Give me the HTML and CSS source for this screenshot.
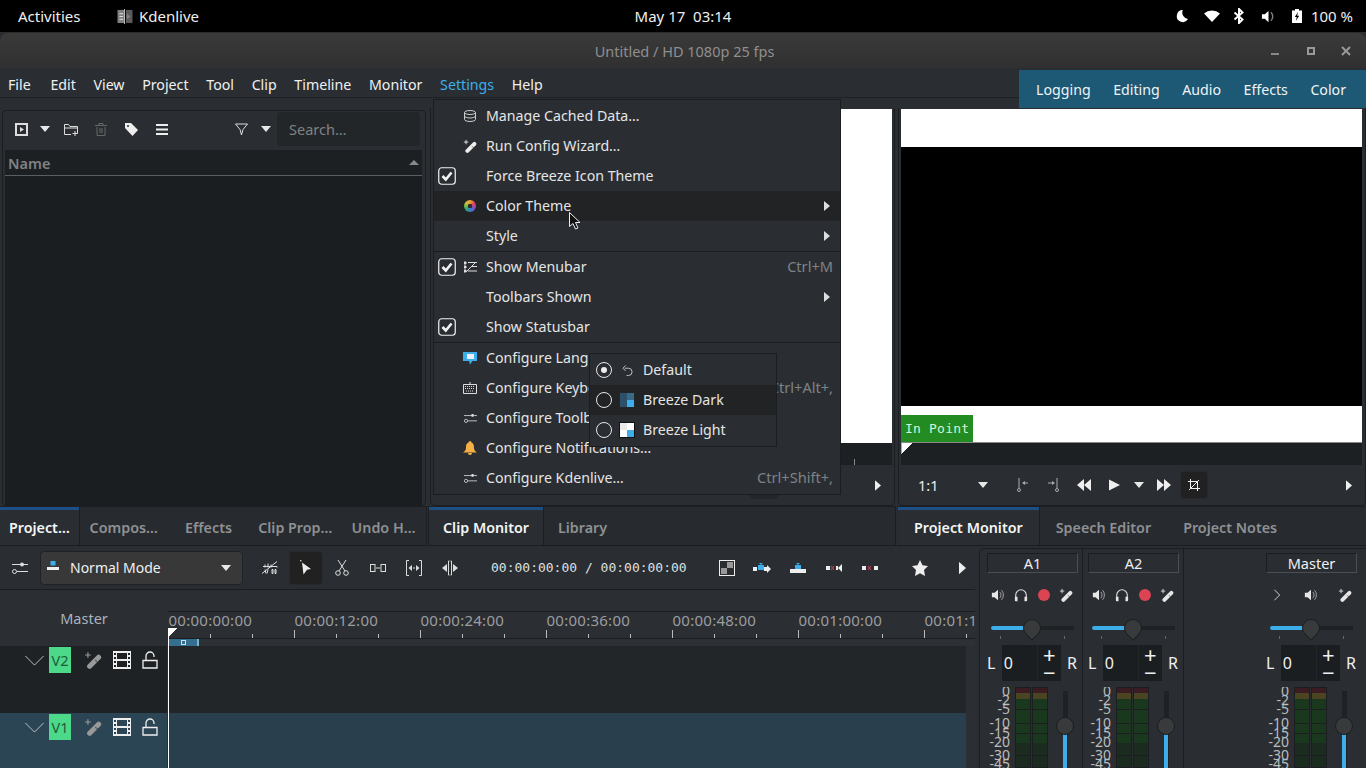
FILE: index.html
```html
<!DOCTYPE html>
<html lang="en">
<head>
<meta charset="utf-8">
<title>Kdenlive</title>
<link rel="stylesheet" href="styles.css">
</head>
<body>
<svg class="defs" width="0" height="0" aria-hidden="true">
  <symbol id="wand" viewBox="0 0 16 16"><path d="M5 13.500 13 5.500" stroke="currentColor" stroke-width="4.500" stroke-linecap="round" fill="none"/><path d="M10 8l2.500 2.500" stroke="#2a2e32" stroke-width="1" opacity=".6"/><path d="M3.500 1v5M1 3.500h5" stroke="currentColor" stroke-width="1" fill="none"/></symbol>
  <symbol id="sliders" viewBox="0 0 16 16"><path d="M0 4.500h16M5 11.500h11" stroke="currentColor" stroke-width="1" fill="none"/><circle cx="10" cy="4.500" r="2" fill="currentColor"/><circle cx="2.500" cy="11.500" r="2" fill="#2a2e32" stroke="currentColor"/></symbol>
  <symbol id="speaker" viewBox="0 0 16 16"><path d="M1 5.500h3L8 2v12l-4-3.500H1z" fill="currentColor"/><path d="M10 4.500a5 5 0 0 1 0 7M12 2.500a8 8 0 0 1 0 11" stroke="currentColor" stroke-width="1" fill="none" opacity=".7"/></symbol>
  <symbol id="phones" viewBox="0 0 16 16"><path d="M2 12V8a6 6 0 0 1 12 0v4" stroke="currentColor" stroke-width="1.200" fill="none"/><path d="M1 10h3v5H2a1 1 0 0 1-1-1zM15 10h-3v5h2a1 1 0 0 0 1-1z" fill="currentColor"/></symbol>
  <symbol id="film" viewBox="0 0 18 18"><path fill-rule="evenodd" d="M0 0h18v18H0zM4 2v6h10V2zM4 10v6h10v-6zM1 2v2h2V2zM1 6v2h2V6zM1 10v2h2v-2zM1 14v2h2v-2zM15 2v2h2V2zM15 6v2h2V6zM15 10v2h2v-2zM15 14v2h2v-2z" fill="currentColor"/></symbol>
  <symbol id="lock" viewBox="0 0 16 18"><path d="M1 9.500h14v7.500H1zM4 9V5a4 4 0 0 1 8 0v1" stroke="currentColor" stroke-width="1.300" fill="none"/></symbol>
  <symbol id="chev" viewBox="0 0 22 12"><path d="M1 1l10 10L21 1" stroke="currentColor" stroke-width="1" fill="none"/></symbol>
  <symbol id="check" viewBox="0 0 18 18"><rect x=".75" y=".75" width="16.500" height="16.500" rx="3" fill="none" stroke="currentColor" stroke-width="1.200"/><path d="M4.500 9l3.300 3.500 5.700-7" stroke="currentColor" stroke-width="2.600" fill="none"/></symbol>
  <symbol id="conf" viewBox="0 0 16 12"><path d="M0 3h16M5 9.500h11" stroke="currentColor" stroke-width="1" fill="none"/><rect x="9" y="1" width="3" height="3.500" rx="1" fill="currentColor"/><circle cx="2.500" cy="9.500" r="2" fill="#2a2e32" stroke="currentColor"/></symbol>
  <symbol id="playr" viewBox="0 0 8 14"><path d="M0 0l8 7-8 7z" fill="currentColor"/></symbol>
</svg>

<div class="desk">
  <header class="topbar">
    <div class="top-left">
      <span class="activities">Activities</span>
      <span class="appmenu">
        <svg class="appicon" viewBox="0 0 16 16"><path d="M0 1h7v14H0z" fill="#808080"/><path d="M9 1h7v14H9z" fill="#5a5a5a"/><path d="M2 5h4M2 8h4M2 11h4" stroke="#ddd" stroke-width="1"/><path d="M10 5l4 3-4 3z" fill="#808080"/><path d="M7.500 0v16" stroke="#ccc"/></svg>
        Kdenlive
      </span>
    </div>
    <div class="clock">May 17&nbsp; 03:14</div>
    <div class="tray">
      <svg class="t-moon" viewBox="0 0 14 14"><path d="M8 0a7 7 0 1 0 6 10.500A7.500 7.500 0 0 1 8 0z" fill="#fff"/></svg>
      <svg class="t-wifi" viewBox="0 0 16 12"><path d="M0 3.500a12 12 0 0 1 16 0L8 12z" fill="#fff"/></svg>
      <svg class="t-bt" viewBox="0 0 12 16"><path d="M1.500 4.500l8 7L6 15V1l3.500 3.500-8 7" stroke="#fff" stroke-width="2" fill="none"/></svg>
      <svg class="t-vol" viewBox="0 0 16 16"><path d="M1 5.500h3L8 2v12l-4-3.500H1z" fill="#fff"/><path d="M10.500 3.500a6 6 0 0 1 0 9" stroke="#fff" stroke-width="1.500" fill="none" opacity=".5"/></svg>
      <svg class="t-bat" viewBox="0 0 10 14"><path d="M3 0h4v1.500h3V14H0V1.500h3z" fill="#fff"/><path d="M6 3L2.800 8h2l-1 4L7.200 6.800h-2z" fill="#000"/></svg>
      <span class="pct">100 %</span>
    </div>
  </header>

  <div class="window">
    <div class="titlebar">
      <span class="wintitle">Untitled / HD 1080p 25 fps</span>
      <div class="winctl">
        <span class="wc-min"></span>
        <span class="wc-max"></span>
        <svg class="wc-close" viewBox="0 0 10 10"><path d="M1 1l8 8M9 1l-8 8" stroke="#999" stroke-width="2"/></svg>
      </div>
    </div>

    <nav class="menubar">
      <div class="menus">
        <span class="m-file">File</span><span>Edit</span><span>View</span><span>Project</span><span>Tool</span><span>Clip</span><span>Timeline</span><span>Monitor</span><span class="on">Settings</span><span>Help</span>
      </div>
      <div class="layouts">
        <span>Logging</span><span>Editing</span><span>Audio</span><span>Effects</span><span>Color</span>
      </div>
    </nav>

    <section class="docks">
      <div class="dock dock-left">
        <div class="bin">
          <div class="bin-bar">
            <svg class="bi b-add" viewBox="0 0 13 13"><rect x="1" y="1" width="11" height="11" fill="none" stroke="#ddd" stroke-width="2"/><path d="M5 4l4 2.500L5 9z" fill="#ddd"/></svg>
            <i class="caret c-a"></i>
            <svg class="bi b-folder" viewBox="0 0 14 13"><path d="M.5 11.500V1.500h4l1.500 2h7.500v7M.5 5h13M.5 11.500H7" stroke="#ddd" fill="none"/><path d="M11 8v5M8.500 10.500h5" stroke="#ddd"/></svg>
            <svg class="bi b-trash" viewBox="0 0 12 13"><path d="M2 4v8.500h8V4M0 2.500h12M4 2V.5h4V2M5 5v5M7 5v5" stroke="#666" fill="none"/></svg>
            <svg class="bi b-tag" viewBox="0 0 13 13"><path d="M0 2V0h6l7 7-5.500 6L0 5z" fill="#eee"/><circle cx="3" cy="3" r="1" fill="#2a2e32"/></svg>
            <svg class="bi b-menu" viewBox="0 0 12 11"><path d="M0 1h12M0 5.500h12M0 10h12" stroke="#eee" stroke-width="2"/></svg>
            <svg class="bi b-funnel" viewBox="0 0 13 13"><path d="M.5 1h12L8 6.500 6.500 12 5 6.500z" fill="none" stroke="#ddd"/></svg>
            <i class="caret c-b"></i>
            <div class="search">Search…</div>
          </div>
          <div class="tree-head"><span>Name</span><i class="caret up"></i></div>
          <div class="tree-body"></div>
        </div>
        <div class="tabbar">
          <span class="tab active">Project…</span><span class="tab">Compos…</span><span class="tab">Effects</span><span class="tab">Clip Prop…</span><span class="tab">Undo H…</span>
        </div>
      </div>

      <div class="dock dock-clip">
        <div class="monitor">
          <div class="video plain"></div>
          <div class="mruler"><i class="rtick"></i></div>
          <div class="mbar">
            <span class="grow"></span>
            <svg class="mnext" viewBox="0 0 8 14"><use href="#playr"/></svg>
          </div>
        </div>
        <div class="tabbar">
          <span class="tab active">Clip Monitor</span><span class="tab">Library</span>
        </div>
      </div>

      <div class="dock dock-project">
        <div class="monitor">
          <div class="video">
            <div class="vwhite"></div>
            <div class="vblack"></div>
            <div class="vwhite low"><span class="inpoint">In Point</span></div>
          </div>
          <div class="mruler"><i class="mhead"></i></div>
          <div class="mbar">
            <span class="ratio">1:1</span>
            <i class="caret c-ratio"></i>
            <svg class="mi m-in" viewBox="0 0 12 14"><path d="M3 0v10M12 5H7" stroke="#aaa"/><circle cx="3" cy="12" r="1.500" fill="none" stroke="#aaa"/><path d="M6 5l3-2v4z" fill="#aaa"/></svg>
            <svg class="mi m-out" viewBox="0 0 12 14"><path d="M9 0v10M0 5h5" stroke="#aaa"/><circle cx="9" cy="12" r="1.500" fill="none" stroke="#aaa"/><path d="M7 5L4 3v4z" fill="#aaa"/></svg>
            <svg class="mi m-rw" viewBox="0 0 14 12"><path d="M7 0v12L0 6zM14 0v12L7 6z" fill="#eee"/></svg>
            <svg class="mi m-play" viewBox="0 0 12 12"><path d="M0 0l12 6-12 6z" fill="#eee"/></svg>
            <i class="caret c-play"></i>
            <svg class="mi m-ff" viewBox="0 0 14 12"><path d="M0 0v12l7-6zM7 0v12l7-6z" fill="#eee"/></svg>
            <span class="m-crop"><svg viewBox="0 0 12 12"><path d="M0 2.500h9.500V12M2.500 0v9.500H12M1 11l10-10" stroke="#eee" fill="none"/></svg></span>
            <span class="grow"></span>
            <svg class="mnext" viewBox="0 0 8 14"><use href="#playr"/></svg>
          </div>
        </div>
        <div class="tabbar">
          <span class="tab active">Project Monitor</span><span class="tab">Speech Editor</span><span class="tab">Project Notes</span>
        </div>
      </div>
    </section>

    <section class="bottom">
      <div class="timeline">
        <div class="tl-bar">
          <svg class="ti ti-set" viewBox="0 0 16 16"><use href="#sliders"/></svg>
          <div class="combo">
            <svg class="combo-ic" viewBox="0 0 12 10"><rect x="3.500" y="0" width="5" height="4.500" fill="#3daee9"/><rect x="0" y="6" width="12" height="3" fill="#eee"/></svg>
            <span>Normal Mode</span>
            <i class="caret c-combo"></i>
          </div>
          <svg class="ti ti-sp" viewBox="0 0 16 14"><path d="M0 13L15 1M1 6h14v1M3 4v3M6 3v4M9 4v3" stroke="#ddd" fill="none"/><path d="M10 9h1v4h-1zM13 9h1v4h-1zM3 9l1 4M6 9l-1 4" stroke="#ddd" fill="none"/></svg>
          <span class="tool-on"><svg viewBox="0 0 12 15"><circle cx=".8" cy=".8" r=".8" fill="#eee"/><path d="M2 2.500l9 6.500-4 .8L3.500 14.500z" fill="#eee"/></svg></span>
          <svg class="ti ti-cut" viewBox="0 0 14 16"><path d="M3 0l7 11M11 0L4 11" stroke="#ddd" fill="none"/><circle cx="3" cy="13" r="2.300" fill="none" stroke="#ddd"/><circle cx="11" cy="13" r="2.300" fill="none" stroke="#ddd"/></svg>
          <svg class="ti ti-sl" viewBox="0 0 16 8"><rect x=".5" y=".5" width="4.500" height="7" fill="none" stroke="#ddd"/><rect x="11" y=".5" width="4.500" height="7" fill="none" stroke="#ddd"/><path d="M6 4h4" stroke="#ddd"/></svg>
          <svg class="ti ti-fit" viewBox="0 0 16 16"><path d="M3 .5H.5v15H3M13 .5h2.500v15H13" stroke="#ddd" fill="none"/><path d="M2.500 8l3.500-3v6zM13.500 8L10 5v6z" fill="#ddd"/><path d="M7 7.500h2v1H7z" fill="#ddd"/></svg>
          <svg class="ti ti-rip" viewBox="0 0 16 16"><path d="M6.500 1v14M9.500 1v14M6.500 1h1M6.500 15h1M9.500 1h-1M9.500 15h-1" stroke="#ddd" fill="none"/><path d="M0 8l5-4v8zM16 8l-5-4v8z" fill="#ddd"/></svg>
          <span class="tc">00:00:00:00 / 00:00:00:00</span>
          <svg class="ti ti-ck" viewBox="0 0 16 16"><rect x=".5" y=".5" width="15" height="15" fill="none" stroke="#eee"/><rect x="8" y="2" width="6" height="6" fill="#999"/><rect x="2" y="8" width="6" height="6" fill="#999"/></svg>
          <svg class="ti ti-a" viewBox="0 0 18 10"><rect x="5" y="2" width="6" height="5" fill="#3daee9"/><path d="M6 0h4L8 2z" fill="#3daee9"/><rect x="0" y="4" width="4" height="4" fill="#eee"/><rect x="11" y="4" width="3" height="4" fill="#eee"/><path d="M14 2l4 4-4 4z" fill="#eee"/></svg>
          <svg class="ti ti-b" viewBox="0 0 16 10"><rect x="5" y="2" width="6" height="5" fill="#3daee9"/><path d="M6 0h4L8 2z" fill="#3daee9"/><rect x="0" y="6" width="16" height="4" fill="#eee"/></svg>
          <svg class="ti ti-c" viewBox="0 0 16 8"><rect x="0" y="2" width="4" height="4" fill="#eee"/><path d="M5 2l3 4M8 2L5 6" stroke="#da4453"/><rect x="10" y="2" width="2" height="4" fill="#eee"/><path d="M16 0v8l-4-4z" fill="#eee"/></svg>
          <svg class="ti ti-d" viewBox="0 0 16 8"><rect x="0" y="2" width="4" height="4" fill="#eee"/><path d="M6 2l3 4M9 2L6 6" stroke="#da4453"/><rect x="12" y="2" width="4" height="4" fill="#eee"/></svg>
          <svg class="ti ti-star" viewBox="0 0 16 16"><path d="M8 0l2.500 5.300 5.500.8-4 4 1 5.900L8 13.300 3 16l1-5.900-4-4 5.500-.8z" fill="#eee"/></svg>
          <svg class="ti ti-more" viewBox="0 0 8 14"><use href="#playr"/></svg>
        </div>

        <div class="tl-body">
          <div class="ruler-row">
            <div class="rhead">Master</div>
            <div class="ruler">
              <div class="rlabels">
                <span>00:00:00:00</span><span>00:00:12:00</span><span>00:00:24:00</span><span>00:00:36:00</span><span>00:00:48:00</span><span>00:01:00:00</span><span>00:01:12:00</span>
              </div>
              <div class="rticks"></div>
              <div class="rzone"><i class="zone"><b></b></i></div>
            </div>
          </div>
          <div class="track v2">
            <div class="thead">
              <svg class="t-chev" viewBox="0 0 22 12"><use href="#chev"/></svg>
              <span class="tbadge">V2</span>
              <svg class="t-wand" viewBox="0 0 16 16"><use href="#wand"/></svg>
              <svg class="t-film" viewBox="0 0 18 18"><use href="#film"/></svg>
              <svg class="t-lock" viewBox="0 0 16 18"><use href="#lock"/></svg>
            </div>
            <div class="tlane"></div>
          </div>
          <div class="track v1">
            <div class="thead">
              <svg class="t-chev" viewBox="0 0 22 12"><use href="#chev"/></svg>
              <span class="tbadge">V1</span>
              <svg class="t-wand" viewBox="0 0 16 16"><use href="#wand"/></svg>
              <svg class="t-film" viewBox="0 0 18 18"><use href="#film"/></svg>
              <svg class="t-lock" viewBox="0 0 16 18"><use href="#lock"/></svg>
            </div>
            <div class="tlane"></div>
          </div>
          <div class="playhead"></div>
        </div>
      </div>

      <div class="mixer">
        <div class="chan">
          <div class="chan-title">A1</div>
          <div class="chan-ic">
            <svg viewBox="0 0 16 16"><use href="#speaker"/></svg>
            <svg viewBox="0 0 16 16"><use href="#phones"/></svg>
            <span class="rec"></span>
            <svg viewBox="0 0 16 16"><use href="#wand"/></svg>
          </div>
          <div class="pan"><i class="pan-fill"></i><i class="pan-thumb"></i></div>
          <div class="lr"><span>L</span><div class="lr-box"><span class="lr-val">0</span><span class="lr-btn"><b>+</b><b>−</b></span></div><span>R</span></div>
          <div class="meter">
            <div class="scale"><span style="top:-3px">0</span><span style="top:6px">-2</span><span style="top:15px">-5</span><span style="top:29px">-10</span><span style="top:39px">-15</span><span style="top:48px">-20</span><span style="top:61px">-30</span><span style="top:70px">-45</span></div>
            <i class="bar"></i><i class="bar"></i>
            <div class="fader"><i class="f-fill"></i><i class="f-thumb"></i></div>
          </div>
        </div>
        <div class="chan">
          <div class="chan-title">A2</div>
          <div class="chan-ic">
            <svg viewBox="0 0 16 16"><use href="#speaker"/></svg>
            <svg viewBox="0 0 16 16"><use href="#phones"/></svg>
            <span class="rec"></span>
            <svg viewBox="0 0 16 16"><use href="#wand"/></svg>
          </div>
          <div class="pan"><i class="pan-fill"></i><i class="pan-thumb"></i></div>
          <div class="lr"><span>L</span><div class="lr-box"><span class="lr-val">0</span><span class="lr-btn"><b>+</b><b>−</b></span></div><span>R</span></div>
          <div class="meter">
            <div class="scale"><span style="top:-3px">0</span><span style="top:6px">-2</span><span style="top:15px">-5</span><span style="top:29px">-10</span><span style="top:39px">-15</span><span style="top:48px">-20</span><span style="top:61px">-30</span><span style="top:70px">-45</span></div>
            <i class="bar"></i><i class="bar"></i>
            <div class="fader"><i class="f-fill"></i><i class="f-thumb"></i></div>
          </div>
        </div>
        <div class="chan master">
          <div class="chan-title">Master</div>
          <div class="chan-ic">
            <svg viewBox="0 0 16 16"><path d="M5 2l6 6-6 6" stroke="currentColor" fill="none"/></svg>
            <svg viewBox="0 0 16 16"><use href="#speaker"/></svg>
            <svg viewBox="0 0 16 16"><use href="#wand"/></svg>
          </div>
          <div class="pan"><i class="pan-fill"></i><i class="pan-thumb"></i></div>
          <div class="lr"><span>L</span><div class="lr-box"><span class="lr-val">0</span><span class="lr-btn"><b>+</b><b>−</b></span></div><span>R</span></div>
          <div class="meter">
            <div class="scale"><span style="top:-3px">0</span><span style="top:6px">-2</span><span style="top:15px">-5</span><span style="top:29px">-10</span><span style="top:39px">-15</span><span style="top:48px">-20</span><span style="top:61px">-30</span><span style="top:70px">-45</span></div>
            <i class="bar"></i><i class="bar"></i>
            <div class="fader"><i class="f-fill"></i><i class="f-thumb"></i></div>
          </div>
        </div>
      </div>
    </section>
  </div>
</div>

<div class="menu">
  <div class="mrow"><span class="mchk"></span><span class="mic"><svg class="i-db" viewBox="0 0 12 12"><ellipse cx="6" cy="2.500" rx="5.500" ry="2" fill="none" stroke="#ccc"/><path d="M.5 2.500v7c0 1 2.500 2 5.500 2s5.500-1 5.500-2v-7M.5 6c0 1 2.500 2 5.500 2s5.500-1 5.500-2" fill="none" stroke="#ccc"/></svg></span><span class="mtxt">Manage Cached Data…</span></div>
  <div class="mrow"><span class="mchk"></span><span class="mic"><svg class="i-wand" viewBox="0 0 16 16"><use href="#wand"/></svg></span><span class="mtxt">Run Config Wizard…</span></div>
  <div class="mrow"><span class="mchk"><svg viewBox="0 0 18 18"><use href="#check"/></svg></span><span class="mic"></span><span class="mtxt">Force Breeze Icon Theme</span></div>
  <div class="mrow hover"><span class="mchk"></span><span class="mic"><i class="palette"></i></span><span class="mtxt">Color Theme</span><svg class="marrow" viewBox="0 0 6 10"><path d="M0 0l6 5-6 5z" fill="#ddd"/></svg></div>
  <div class="mrow"><span class="mchk"></span><span class="mic"></span><span class="mtxt">Style</span><svg class="marrow" viewBox="0 0 6 10"><path d="M0 0l6 5-6 5z" fill="#ddd"/></svg></div>
  <div class="msep"></div>
  <div class="mrow"><span class="mchk"><svg viewBox="0 0 18 18"><use href="#check"/></svg></span><span class="mic"><svg class="i-mb" viewBox="0 0 13 12"><path d="M0 1h2v2H0zM0 5h2v2H0zM0 9h2v2H0zM4 1.500h9M7 5.500h6M4 10h9M2 11l10-10" fill="#ddd" stroke="#ddd" stroke-width="1"/></svg></span><span class="mtxt">Show Menubar</span><span class="mkey">Ctrl+M</span></div>
  <div class="mrow"><span class="mchk"></span><span class="mic"></span><span class="mtxt">Toolbars Shown</span><svg class="marrow" viewBox="0 0 6 10"><path d="M0 0l6 5-6 5z" fill="#ddd"/></svg></div>
  <div class="mrow"><span class="mchk"><svg viewBox="0 0 18 18"><use href="#check"/></svg></span><span class="mic"></span><span class="mtxt">Show Statusbar</span></div>
  <div class="msep"></div>
  <div class="mrow"><span class="mchk"></span><span class="mic"><svg class="i-lang" viewBox="0 0 14 13"><path d="M0 0h14v9H9.500L7 12.500 6 9H0z" fill="#3daee9"/><rect x="4" y="2" width="7" height="5" fill="#eef"/></svg></span><span class="mtxt">Configure Language…</span></div>
  <div class="mrow"><span class="mchk"></span><span class="mic"><svg class="i-kb" viewBox="0 0 14 12"><path d="M7 0v2M.5 2.500h13v9H.5z" fill="none" stroke="#ddd"/><path d="M2 4.500h10M2 6.500h10M3 9h8" stroke="#ddd" stroke-dasharray="1 1"/></svg></span><span class="mtxt">Configure Keyboard Shortcuts…</span><span class="mkey">Ctrl+Alt+,</span></div>
  <div class="mrow"><span class="mchk"></span><span class="mic"><svg class="i-conf" viewBox="0 0 16 12"><use href="#conf"/></svg></span><span class="mtxt">Configure Toolbars…</span></div>
  <div class="mrow"><span class="mchk"></span><span class="mic"><svg class="i-bell" viewBox="0 0 14 14"><path d="M7 0a1.500 1.500 0 0 1 1.500 1.500C11 2.500 11 5 11 7c0 2 1.500 3.500 3 4.500H0C1.500 10.500 3 9 3 7c0-2 0-4.500 2.500-5.500A1.500 1.500 0 0 1 7 0z" fill="#f4b042"/><path d="M5 12h4a2 2 0 0 1-4 0z" fill="#f4b042"/></svg></span><span class="mtxt">Configure Notifications…</span></div>
  <div class="mrow"><span class="mchk"></span><span class="mic"><svg class="i-conf" viewBox="0 0 16 12"><use href="#conf"/></svg></span><span class="mtxt">Configure Kdenlive…</span><span class="mkey">Ctrl+Shift+,</span></div>
</div>

<div class="submenu">
  <div class="srow"><i class="radio sel"></i><span class="sic"><svg class="i-undo" viewBox="0 0 12 12"><path d="M3 3.500h4a4 4 0 0 1 0 8H5M1 3.500L4 .5M1 3.500l3 3" fill="none" stroke="#ccc"/></svg></span><span class="stxt">Default</span></div>
  <div class="srow hover"><i class="radio"></i><span class="sic"><svg class="swatch" viewBox="0 0 16 16"><rect width="16" height="16" fill="#232629"/><rect x="1" y="1" width="7" height="14" fill="#2c5068"/><rect x="8" y="1" width="7" height="7" fill="#3a6a88"/><rect x="8" y="8" width="7" height="7" fill="#3daee9"/></svg></span><span class="stxt">Breeze Dark</span></div>
  <div class="srow"><i class="radio"></i><span class="sic"><svg class="swatch" viewBox="0 0 16 16"><rect width="16" height="16" fill="#111"/><rect x="1" y="1" width="14" height="14" fill="#fff"/><rect x="1" y="1" width="7" height="7" fill="#eaeaea"/><rect x="8" y="8" width="7" height="7" fill="#3daee9"/></svg></span><span class="stxt">Breeze Light</span></div>
</div>

<svg class="cursor" viewBox="0 0 12 18"><path d="M.5.5v14l3.500-3 2.500 5.500 2.500-1L6.500 10.500h4.500z" fill="#111" stroke="#eee" stroke-width="1"/></svg>
</body>
</html>
```
FILE: styles.css
```css
* { box-sizing: border-box; }
html, body { margin: 0; padding: 0; width: 1366px; height: 768px; overflow: hidden; background: #000; }
body { font-family: "Noto Sans", sans-serif; font-size: 14.200px; color: #eff0f1; position: relative; }
.defs { position: absolute; }
svg { display: block; flex: none; }
i { display: block; }

.desk { display: flex; flex-direction: column; height: 768px; }

/* GNOME top bar */
.topbar { height: 32px; flex: none; background: #000; color: #eee; display: grid; grid-template-columns: 1fr auto 1fr; align-items: center; font-size: 15px; padding: 0 13px 0 18px; }
.top-left { display: flex; align-items: center; }
.activities { width: 99px; }
.appmenu { display: flex; align-items: center; gap: 6px; }
.appicon { width: 16px; height: 15px; }
.clock { margin-right: 5px; }
.tray { display: flex; align-items: center; justify-content: flex-end; }
.t-moon { width: 12px; height: 14px; }
.t-wifi { width: 16px; height: 12px; margin-left: 16px; }
.t-bt { width: 12px; height: 16px; margin-left: 13px; }
.t-vol { width: 15px; height: 15px; margin-left: 16px; }
.t-bat { width: 10px; height: 14px; margin-left: 16px; }
.pct { margin-left: 9px; }

/* title bar */
.window { flex: 1; display: flex; flex-direction: column; background: #2a2e32; min-height: 0; }
.titlebar { height: 36px; flex: none; background: linear-gradient(#3a3a3a, #303030); border-radius: 8px 8px 0 0; border-top: 1px solid #2a2a2a; display: flex; align-items: center; justify-content: center; color: #8f8f8f; font-size: 14.500px; position: relative; }
.wintitle { margin-left: 3px; }
.winctl { position: absolute; right: 0; top: 0; bottom: 0; display: flex; align-items: center; }
.wc-min { width: 8px; height: 2px; background: #888; margin: 7px 0 0 0; }
.wc-max { width: 8px; height: 8px; border: 2px solid #999; margin-left: 28px; }
.wc-close { width: 10px; height: 10px; margin: 0 15px 0 26px; }

/* menu bar */
.menubar { height: 40px; flex: none; display: flex; justify-content: space-between; align-items: flex-start; background: linear-gradient(#2a2e32 29px, #1f2225 29px, #1f2225 30px, #2a2e32 30px); }
.menus { display: flex; gap: 17.700px; padding: 3px 0 0 8px; height: 29px; align-items: center; color: #eff0f1; font-size: 14.200px; }
.menus .m-file { margin-right: 2px; }
.menus .on { color: #3daee9; }
.layouts { width: 347px; height: 38px; margin-top: 2px; background: #1d5875; display: flex; align-items: center; padding: 0 0 0 17px; gap: 22.500px; color: #eef3f6; font-size: 14.200px; }

/* docks */
.docks { height: 438px; flex: none; display: flex; }
.dock { display: flex; flex-direction: column; }
.dock-left { width: 428px; }
.dock-clip { width: 469px; }
.dock-project { width: 469px; }

.tabbar { height: 40px; flex: none; display: flex; font-weight: 600; color: #8e9194; background: #272a2e; border-top: 1px solid #1d2023; border-bottom: 1px solid #1b1e20; font-size: 14.300px; }
.tab { display: flex; align-items: center; padding: 3px 16px 0; white-space: nowrap; }
.tab.active { background: linear-gradient(#1d4f86 3px, #2a2e32 3px); color: #f4f5f6; border-right: 1px solid #1b1e20; }
.dock-left .tabbar { margin-right: 1px; border-right: 1px solid #1b1e20; }
.dock-left .tab { padding: 3px 0 0; justify-content: center; }
.dock-left .tab:nth-child(1) { width: 80px; }
.dock-left .tab:nth-child(2) { width: 88px; }
.dock-left .tab:nth-child(3) { width: 82px; }
.dock-left .tab:nth-child(4) { width: 92px; }
.dock-left .tab:nth-child(5) { width: 85px; }
.dock-clip .tab { padding: 3px 14px 0; }
.dock-clip .tabbar { border-left: 1px solid #1b1e20; margin-right: 1px; border-right: 1px solid #1b1e20; }
.dock-project .tabbar { padding-left: 1px; }

/* bin */
.bin { flex: 1; margin: 2px 2px 0 2px; border: 1px solid #1b1e20; border-radius: 4px; display: flex; flex-direction: column; padding: 0 3px 0 2px; min-height: 0; }
.bin-bar { height: 39px; flex: none; display: flex; align-items: center; padding-bottom: 3px; }
.bi { flex: none; }
.b-add { width: 13px; height: 13px; margin-left: 10px; }
.caret { width: 0; height: 0; border-left: 5px solid transparent; border-right: 5px solid transparent; border-top: 6px solid #e8e8e8; flex: none; }
.caret.up { border-top: 0; border-bottom: 5px solid #888; }
.c-a { margin-left: 12px; }
.b-folder { width: 14px; height: 13px; margin-left: 14px; }
.b-trash { width: 12px; height: 13px; margin-left: 17px; }
.b-tag { width: 13px; height: 13px; margin-left: 18px; }
.b-menu { width: 12px; height: 11px; margin-left: 18px; }
.b-funnel { width: 13px; height: 13px; margin-left: 67px; }
.c-b { margin-left: 13px; }
.search { width: 143px; height: 34px; background: #232629; border-radius: 4px; margin-left: 6px; color: #7f8285; display: flex; align-items: center; padding-left: 12px; font-size: 14.500px; }
.tree-head { height: 26px; flex: none; background: #1d2023; border-bottom: 1px solid #5a5e62; color: #7f8285; font-weight: 600; display: flex; align-items: center; justify-content: space-between; padding: 0 3px 0 3px; font-size: 14.500px; }
.tree-body { flex: 1; background: #1b1e20; }

/* monitors */
.monitor { flex: 1; display: flex; flex-direction: column; min-height: 0; border: 1px solid #1b1e20; border-top: 0; border-radius: 0 0 5px 5px; }
.dock-clip .monitor { margin: 0 2px 0 2px; }
.dock-project .monitor { margin: 0 0 0 1px; }
.video { height: 334px; flex: none; margin: 1px 0 0; background: #fff; display: flex; flex-direction: column; }
.dock-clip .video, .dock-clip .mruler { margin-left: 3px; margin-right: 2px; }
.dock-project .video, .dock-project .mruler { margin-left: 2px; margin-right: 3px; }
.vwhite { height: 38px; flex: none; background: #fff; }
.vblack { height: 259px; flex: none; background: #000; }
.vwhite.low { height: 37px; display: flex; align-items: flex-end; border-bottom: 1px solid #888; }
.inpoint { background: #228b22; color: #d8f4d8; font-family: "DejaVu Sans Mono", monospace; font-size: 13px; letter-spacing: .2px; height: 27px; width: 72px; padding: 5px 0 0 4px; line-height: 17px; }
.mruler { height: 22px; flex: none; background: #1d2023; display: flex; }
.rtick { width: 1px; height: 6px; background: #888; margin: 16px 0 0 420px; }
.mhead { width: 11px; height: 11px; background: linear-gradient(135deg, #fff 50%, transparent 50%); border-left: 1px solid #aaa; }
.mbar { height: 40px; flex: none; display: flex; align-items: center; padding: 0 13px 0 19px; }
.grow { flex: 1; }
.mnext { width: 6px; height: 11px; color: #eee; }
.ratio { width: 40px; font-size: 14.500px; }
.c-ratio { margin-left: 20px; }
.mi { flex: none; }
.m-in { width: 12px; height: 14px; margin-left: 28px; }
.m-out { width: 12px; height: 14px; margin-left: 20px; }
.m-rw { width: 14px; height: 12px; margin-left: 17px; }
.m-play { width: 11px; height: 12px; margin-left: 18px; }
.c-play { margin-left: 14px; }
.m-ff { width: 14px; height: 12px; margin-left: 13px; }
.m-crop { width: 28px; height: 28px; margin-left: 9px; background: #212121; border-radius: 4px; display: flex; align-items: center; justify-content: center; border: 1px solid #26282b; }
.m-crop svg { width: 12px; height: 12px; }

/* timeline */
.bottom { flex: 1; display: flex; min-height: 0; }
.timeline { width: 975px; flex: none; display: flex; flex-direction: column; }
.tl-bar { height: 44px; flex: none; display: flex; align-items: center; border-bottom: 1px solid #1b1e20; background: #2a2e32; }
.ti { flex: none; }
.ti-set { width: 16px; height: 16px; margin-left: 12px; color: #ddd; }
.combo { width: 203px; height: 34px; margin-left: 12px; background: #383838; border: 1px solid #1f2225; border-radius: 4px; display: flex; align-items: center; padding-left: 6px; }
.combo-ic { width: 12px; height: 10px; margin-bottom: 3px; }
.combo span { margin-left: 11px; flex: 1; font-size: 14px; }
.c-combo { margin-right: 11px; }
.ti-sp { width: 16px; height: 15px; margin-left: 19px; }
.tool-on { width: 34px; height: 34px; margin-left: 11px; background: #212121; border-radius: 4px; border: 1px solid #26282b; display: flex; align-items: center; justify-content: center; flex: none; }
.tool-on svg { width: 12px; height: 15px; }
.ti-cut { width: 14px; height: 16px; margin-left: 12px; }
.ti-sl { width: 16px; height: 8px; margin-left: 21px; }
.ti-fit { width: 16px; height: 16px; margin-left: 20px; }
.ti-rip { width: 16px; height: 16px; margin-left: 20px; }
.tc { font-family: "DejaVu Sans Mono", monospace; font-size: 13px; margin-left: 33px; width: 196px; color: #dfe0e1; }
.ti-ck { width: 16px; height: 16px; margin-left: 32px; }
.ti-a { width: 18px; height: 10px; margin-left: 18px; }
.ti-b { width: 16px; height: 10px; margin-left: 19px; }
.ti-c { width: 16px; height: 8px; margin-left: 20px; }
.ti-d { width: 16px; height: 8px; margin-left: 20px; }
.ti-star { width: 16px; height: 16px; margin-left: 34px; }
.ti-more { width: 7px; height: 14px; margin-left: 31px; color: #eee; }

.tl-body { flex: 1; display: flex; flex-direction: column; position: relative; min-height: 0; background: #2b2e33; }
.ruler-row { height: 56px; flex: none; display: flex; }
.rhead { width: 168px; flex: none; text-align: center; padding-top: 18px; color: #a9b4bd; font-size: 14.500px; line-height: 20px; }
.ruler { flex: 1; min-width: 0; display: flex; flex-direction: column; padding-top: 21px; overflow: hidden; }
.rlabels { display: flex; height: 19px; border-top: 1px solid #1b1e20; color: #9b9d9f; white-space: nowrap; font-size: 15px; letter-spacing: .26px; line-height: 16px; flex: none; }
.rlabels span { width: 126px; flex: none; padding-left: .5px; }
.rticks { height: 8px; flex: none; background-image: linear-gradient(90deg, #bbb 1px, transparent 1px), linear-gradient(90deg, #bbb 1px, transparent 1px); background-repeat: repeat-x; background-size: 126px 8px, 42px 4px; background-position: 0 bottom, 0 bottom; }
.rzone { height: 8px; flex: none; background: #2d3035; border-top: 1px solid #1b1e20; }
.zone { width: 30px; height: 7px; background: #356f8f; display: flex; justify-content: center; border-right: 2px solid #7fb2c9; margin-left: 1px; }
.zone b { width: 5px; height: 5px; margin-top: 1px; background: #356f8f; border: 1px solid #cde; }
.track { height: 67px; flex: none; display: flex; }
.thead { width: 167px; flex: none; display: flex; align-items: flex-start; color: #eee; padding-top: 1px; }
.v2 .thead { background: #1f2225; }
.v1 .thead { background: #2c4554; }
.tlane { flex: 1; margin: 0 9px 0 2px; }
.v2 .tlane { background: #232629; }
.v1 .tlane { background: #293f4d; }
.t-chev { width: 21px; height: 11px; margin: 8px 0 0 24px; color: #ccc; }
.tbadge { width: 22px; height: 26px; margin-left: 4px; background: #4cd98a; color: #1d5c38; display: flex; align-items: center; justify-content: center; font-size: 14.500px; flex: none; }
.t-wand { width: 18px; height: 18px; margin: 4px 0 0 13px; color: #999; }
.t-film { width: 18px; height: 18px; margin: 4px 0 0 11px; }
.t-lock { width: 16px; height: 18px; margin: 4px 0 0 11px; }
.playhead { position: absolute; left: 168px; top: 38px; bottom: 0; width: 1px; background: #fff; }
.playhead::before { content: ""; position: absolute; left: 0; top: 0; width: 9px; height: 10px; background: linear-gradient(135deg, #fff 50%, transparent 50%); }

/* mixer */
.mixer { flex: 1; margin: 2px 0 0 4px; display: flex; border-left: 1px solid #1b1e20; border-top: 1px solid #1b1e20; border-radius: 5px 0 0 0; padding-left: 2px; min-width: 0; }
.chan { width: 101px; flex: none; border-right: 1px solid #1b1e20; display: flex; flex-direction: column; }
.chan.master { width: 100px; margin-left: 77px; border-right: 0; }
.chan-title { width: 91px; height: 20px; flex: none; margin: 4px 0 0 5px; border: 1px solid #1b1e20; border-bottom-color: #4b4f53; border-right-color: #4b4f53; display: flex; align-items: center; justify-content: center; font-size: 14.500px; }
.chan-ic { height: 22px; margin-top: 11px; flex: none; display: flex; align-items: center; justify-content: space-between; padding: 0 9px 0 9px; color: #e6e6e6; }
.chan-ic svg { width: 14px; height: 14px; }
.rec { width: 12px; height: 12px; border-radius: 50%; background: #da4453; }
.pan { height: 16px; margin: 15px 8px 0 9px; flex: none; position: relative; background: linear-gradient(#1f2225, #1f2225) no-repeat 0 5px / 100% 4px; border-radius: 2px; }
.pan::after { content: ""; position: absolute; left: 9px; right: 9px; top: 15px; height: 3px; border-left: 1px solid #666; border-right: 1px solid #666; }
.pan-fill { position: absolute; left: 0; top: 5px; width: 34px; height: 4px; background: #3daee9; border-radius: 2px; }
.pan-thumb { position: absolute; left: 32px; top: -2px; width: 18px; height: 18px; background: #383a3c; border: 1px solid #1b1e20; border-radius: 50% 50% 0 50%; transform: rotate(45deg); z-index: 1; }
.lr { height: 36px; margin-top: 8px; flex: none; display: flex; align-items: center; justify-content: space-between; padding: 0 5px 0 5px; font-size: 16px; }
.lr-box { width: 59px; height: 36px; background: #1b1e20; display: flex; align-items: center; justify-content: space-between; }
.lr-val { padding-left: 2px; }
.lr-btn { width: 24px; height: 36px; border-left: 1px solid #232629; display: flex; flex-direction: column; align-items: center; font-size: 22px; line-height: 18px; }
.lr-btn b { font-weight: 400; height: 18px; }
.meter { flex: 1; margin-top: 6px; display: flex; position: relative; min-height: 0; overflow: hidden; }
.scale { width: 33px; position: relative; flex: none; font-size: 14px; color: #bcbdbe; }
.scale span { position: absolute; right: 5px; line-height: 14px; }
.bar { width: 16px; margin-right: 1px; flex: none; background: linear-gradient(#1b1e20, #1b1e20) no-repeat 0 21px / 100% 1px, linear-gradient(#1b1e20, #1b1e20) no-repeat 0 35px / 100% 1px, linear-gradient(#1b1e20, #1b1e20) no-repeat 0 45px / 100% 1px, linear-gradient(#1b1e20, #1b1e20) no-repeat 0 67px / 100% 1px, linear-gradient(#3a1c22 0 5px, #4a4422 5px 11px, #1a381d 11px 55px, #1b2b20 55px); border: 1px solid #1b1e20; }
.fader { width: 32px; position: relative; flex: none; }
.fader::before { content: ""; position: absolute; left: 14px; top: 4px; bottom: 0; width: 5px; background: #1f2225; }
.f-fill { position: absolute; left: 14px; top: 47px; bottom: 0; width: 4px; background: #3daee9; }
.f-thumb { position: absolute; left: 7px; top: 30px; width: 18px; height: 18px; border-radius: 50%; background: #383a3c; border: 1px solid #1b1e20; }

/* menus */
.menu { position: absolute; left: 433px; top: 99px; width: 408px; height: 396px; background: #2a2e32; border: 1px solid #1b1e20; padding: 1px 0; }
.menu::after { content: ""; position: absolute; left: 316px; top: 395px; width: 28px; height: 4px; background: #232629; border-radius: 0 0 4px 4px; }
.mrow { height: 30px; display: flex; align-items: center; padding-right: 7px; }
.mrow.hover { background: #212325; }
.msep { height: 1px; background: #1b1e20; }
.mchk { width: 26px; flex: none; padding-left: 4px; color: #f2f2f2; }
.mchk svg { width: 18px; height: 18px; }
.mic { width: 26px; flex: none; display: flex; justify-content: center; padding-right: 6px; }
.mtxt { flex: 1; white-space: nowrap; color: #e4e5e6; margin-top: -2px; }
.mkey { color: #7f8285; margin-top: -2px; font-size: 14.600px; }
.marrow { width: 6px; height: 10px; margin-right: 3px; }
.i-db { width: 12px; height: 12px; }
.i-wand { width: 14px; height: 14px; color: #eee; }
.i-mb { width: 13px; height: 12px; }
.i-lang { width: 14px; height: 13px; }
.i-kb { width: 14px; height: 12px; }
.i-conf { width: 13px; height: 10px; color: #ddd; }
.i-bell { width: 14px; height: 14px; }
.palette { width: 12px; height: 12px; border-radius: 50%; background: radial-gradient(circle, #2a2e32 0 2px, transparent 2.500px), conic-gradient(#f0a030, #e04060, #8050c0, #3080d0, #30b060, #c0c030, #f0a030); }

.submenu { position: absolute; left: 589px; top: 353px; width: 188px; height: 94px; background: #2a2e32; border: 1px solid #1b1e20; padding: 1px 0; }
.srow { height: 30px; display: flex; align-items: center; padding-left: 6px; white-space: nowrap; color: #e4e5e6; }
.srow.hover { background: #212325; }
.stxt { margin-top: -2px; }
.radio { width: 16px; height: 16px; border-radius: 50%; border: 1px solid #e8e8e8; flex: none; position: relative; }
.radio.sel::after { content: ""; position: absolute; left: 4px; top: 4px; width: 6px; height: 6px; border-radius: 50%; background: #eee; }
.sic { width: 30px; flex: none; display: flex; justify-content: center; margin-right: 1px; }
.i-undo { width: 11px; height: 11px; }
.swatch { width: 16px; height: 16px; }

.cursor { position: absolute; left: 569px; top: 212px; width: 12px; height: 18px; }
```
